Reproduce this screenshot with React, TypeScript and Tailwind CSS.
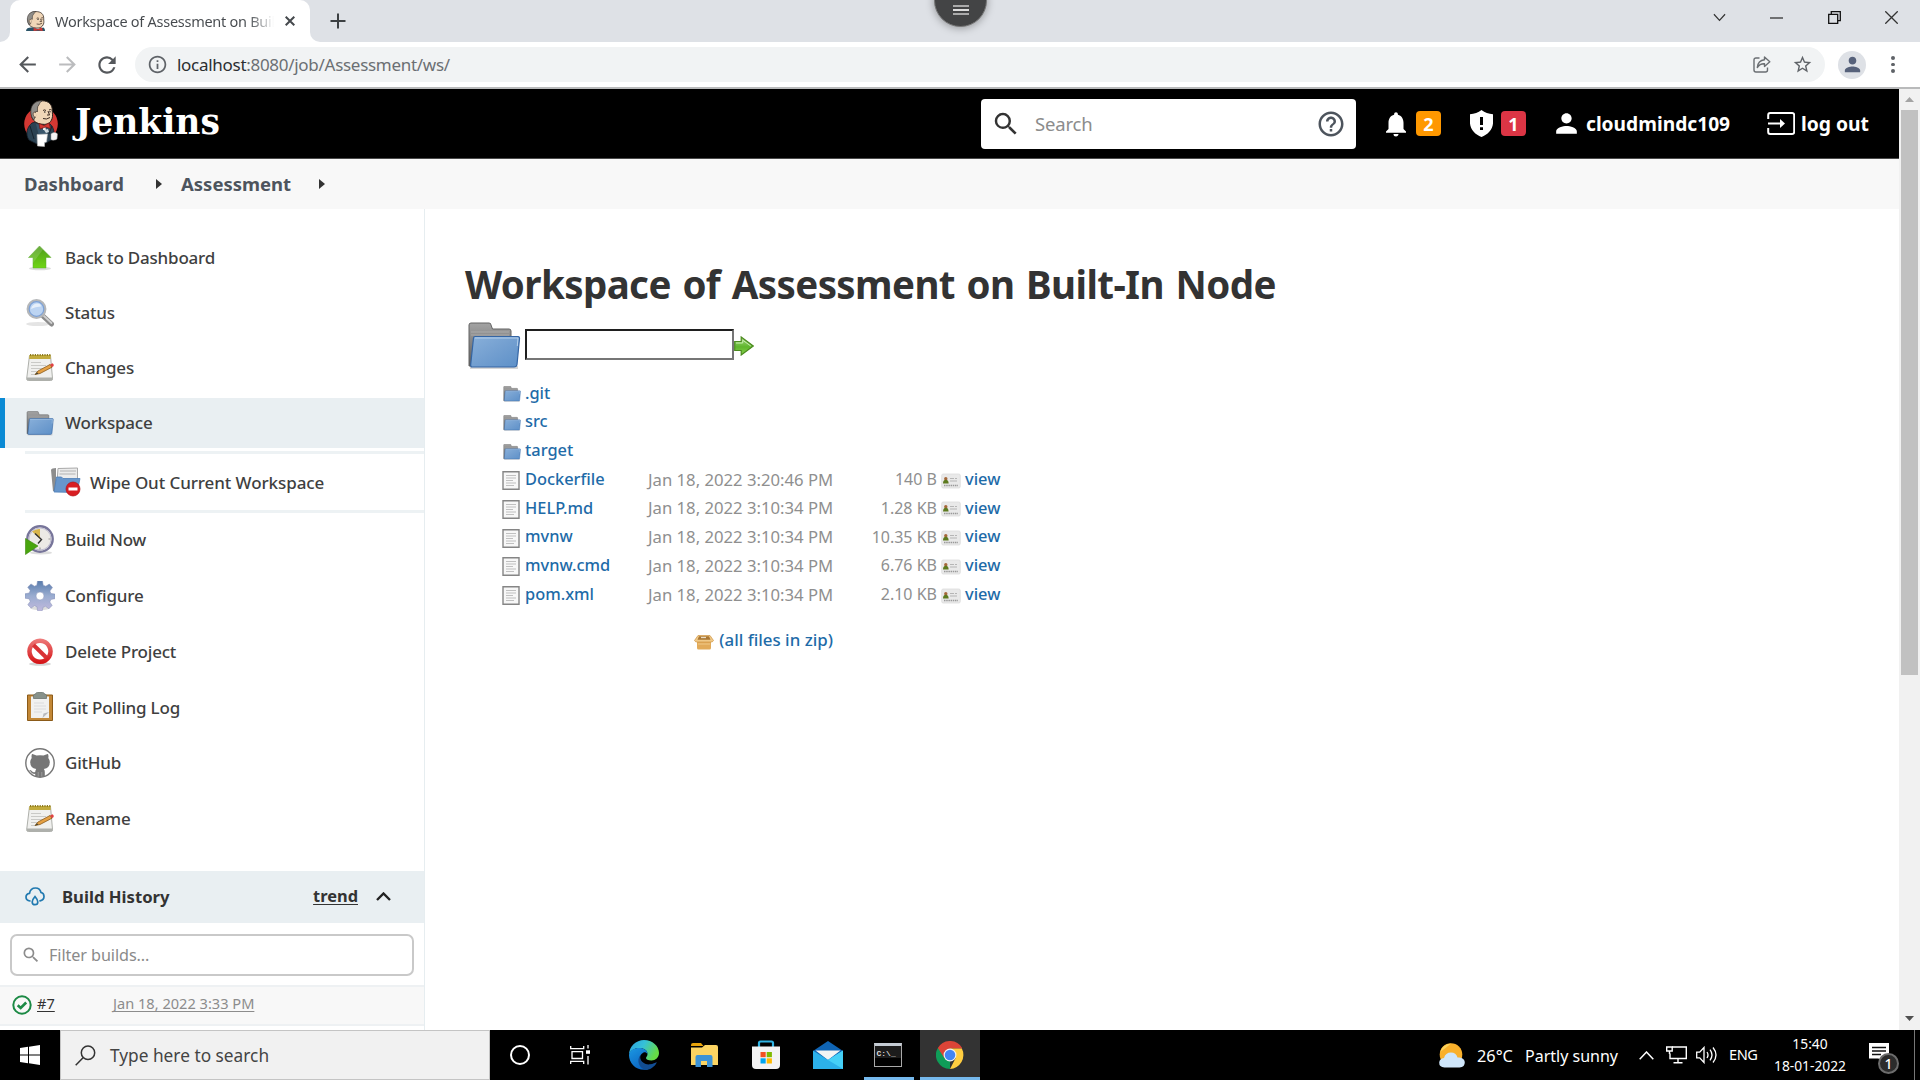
import React, { type ReactNode } from "react";
import {
  MdArrowBack,
  MdArrowForward,
  MdRefresh,
  MdOutlineInfo,
  MdStarBorder,
  MdPerson,
  MdSearch,
  MdHelpOutline,
  MdNotifications,
} from "react-icons/md";

/* ---------- Browser chrome icons ---------- */

const ButlerHead = () => (
  <>
    <path d="M10 8C8 4 12 .8 18 .8c7 0 10.500 4 10.300 10 0 3 .7 5-.3 8-1.500 4-4.500 6-9 5.500C13 24 8 21 7.500 15 7 11 8 9 10 8z" fill="#f0d6b7" stroke="#2b211c" strokeWidth="1" />
    <path d="M18 .8C11 .5 7 5 6.800 11c-.1 4 1 7 3 9l2-5-1-2 1.500-2 1 1c.5-3-.5-5 1.500-7 1-2 2-3.500 3.200-4.200z" fill="#8f8d89" stroke="#332d29" strokeWidth=".7" />
    <path d="M12 13c-2-2-3.500 0-2.500 2.500.5 1.500 1.500 2 2.500 1.500" fill="#f0d6b7" stroke="#4a3528" strokeWidth=".7" />
    <path d="M19 10.500q1.500-1.200 3 0M25 10q1.500-1 2.600 0M24 11l1.500 4h-2.500M19 18.500q3.500 1.500 7-1" fill="none" stroke="#3b2a22" strokeWidth="1" />
    <circle cx="20.800" cy="12" r=".8" fill="#222" />
    <circle cx="26" cy="11.700" r=".7" fill="#222" />
  </>
);

const JenkinsLogo = () => (
  <svg viewBox="0 0 34 47" className="h-[47px] w-[34px]">
    <circle cx="17" cy="24" r="16.800" fill="#d33833" />
    <path d="M5 40C1 34 3 27 8 23l7-2 11 3c4 3 5 10 3 15l-7 4-9 1z" fill="#2b4252" stroke="#14202a" strokeWidth=".8" />
    <path d="M12 24l3 12 8-1 3-10z" fill="#39566b" />
    <ButlerHead />
    <path d="M19 27l2-1 1 4h-3z" fill="#eee" />
    <path d="M15 23.500l5 2 5-2.500 1.500 5.500-5-1.500-5.500 2z" fill="#d33833" stroke="#7c1512" strokeWidth=".7" />
    <path d="M20 30l4-1 1 3-3 1z" fill="#cfd9de" />
    <path d="M13 34.500l10.500-.5-1 8-2 .5v4l-7-.5z" fill="#fff" stroke="#bbb" strokeWidth=".6" />
    <path d="M27 34c2-2 5-2 6.500 0l-.5 5c-2 1.500-5 1.500-6 .5z" fill="#f5f5f5" stroke="#999" strokeWidth=".5" />
    <path d="M6 26l4 13M28 26l-3 8" stroke="#17242e" strokeWidth="1" fill="none" />
  </svg>
);

const Favicon = () => (
  <svg viewBox="5 0 25 28.500" className="h-5 w-[19px]" preserveAspectRatio="none">
    <ButlerHead />
    <path d="M5 28.500c0-4 4-5.500 8-5l8 2 7-2c1.500 1 2 3 2 5z" fill="#2b5468" />
    <path d="M15 24l5 2 6-2.500 1 5-6-1-6 1z" fill="#d33833" />
  </svg>
);

const WindowButtons = () => (
  <div className="flex items-center gap-[44.500px] text-[#333]">
    <svg viewBox="0 0 14 9" className="h-[9px] w-[13px] fill-none stroke-current stroke-[1.3]"><path d="M1 1l6 6.500L13 1" /></svg>
    <svg viewBox="0 0 13 13" className="h-[13px] w-[13px] stroke-current stroke-[1.3]"><path d="M0 7h13" /></svg>
    <svg viewBox="0 0 13 13" className="h-[13px] w-[13px] fill-none stroke-[#111] stroke-[1.3]"><path d="M.7 3.300h9v9h-9zM3.300 3V.7h9v9H10" /></svg>
    <svg viewBox="0 0 13 13" className="h-[13px] w-[13px] stroke-current stroke-[1.3]"><path d="M.3.300l12.400 12.400M12.700.300L.3 12.700" /></svg>
  </div>
);

const TabStrip = () => (
  <div className="relative flex h-[42px] shrink-0 bg-[#dee1e6]">
    <div className="flex w-[10px] items-end">
      <div className="h-[10px] w-[10px] bg-white"><div className="h-full w-full rounded-br-[10px] bg-[#dee1e6]" /></div>
    </div>
    <div className="flex h-full w-[300px] items-center rounded-t-[10px] bg-white pr-[14px] pl-4">
      <Favicon />
      <div className="ml-[10px] w-[219px] overflow-hidden whitespace-nowrap bg-gradient-to-r from-[#45494d] from-88% to-white bg-clip-text text-[14.500px] leading-6 tracking-[-0.019em] text-transparent">
        Workspace of Assessment on Built
      </div>
      <svg viewBox="0 0 10 10" className="ml-[11px] h-[10px] w-[10px] shrink-0 stroke-[#45494d] stroke-2"><path d="M.7.700l8.600 8.600M9.300.700L.7 9.300" /></svg>
    </div>
    <div className="flex w-[10px] items-end">
      <div className="h-[10px] w-[10px] bg-white"><div className="h-full w-full rounded-bl-[10px] bg-[#dee1e6]" /></div>
    </div>
    <svg viewBox="0 0 16 16" className="mt-[13px] ml-[10px] h-4 w-4 stroke-[#3c4043] stroke-2"><path d="M8 .5v15M.5 8h15" /></svg>
    <div className="ml-auto flex h-[35px] items-center pr-[22px]"><WindowButtons /></div>
    <div className="absolute top-[-26px] left-[934px] flex h-[53px] w-[53px] flex-col items-center justify-end gap-0.5 rounded-full border border-[#777] bg-[#434445] pb-[11px] shadow-[0_1px_8px_rgba(0,0,0,0.35)]">
      <div className="h-0.5 w-4 bg-[#aaa]" />
      <div className="h-0.5 w-4 bg-[#ddd]" />
      <div className="h-0.5 w-4 bg-[#aaa]" />
    </div>
  </div>
);

const Toolbar = () => (
  <div className="flex h-[47px] shrink-0 items-center border-b-2 border-[#b9babb] bg-white">
    <MdArrowBack className="ml-[15px] h-[25px] w-[25px] text-[#55585c]" />
    <MdArrowForward className="ml-[15px] h-[25px] w-[25px] text-[#bbbcbe]" />
    <MdRefresh className="ml-[14px] h-[26px] w-[26px] text-[#55585c]" />
    <div className="ml-[15px] flex h-[35px] w-[1690px] items-center rounded-full bg-[#f1f3f4] pr-[12px] pl-[12px]">
      <MdOutlineInfo className="h-[21px] w-[21px] text-[#5f6368]" />
      <div className="ml-[9px] text-[17px] leading-6 tracking-[-0.017em] text-[#6b6f73]">
        <span className="text-[#2b2e31]">localhost</span>:8080/job/Assessment/ws/
      </div>
      <svg viewBox="0 0 18 17" className="ml-auto h-[17px] w-[18px] fill-none stroke-[#6a6e72] stroke-[1.400]">
        <path d="M6.500 2H3Q1 2 1 4v10q0 2 2 2h9.500q2 0 2-2v-2.500" />
        <path d="M11.500 1l5.300 4.700-5.300 4.700V7.800Q7 7.500 4.300 11.500 5 4.500 11.500 3.800z" strokeLinejoin="round" />
      </svg>
      <MdStarBorder className="ml-[21px] h-[21px] w-[21px] text-[#5f6368]" />
    </div>
    <div className="ml-[13px] flex h-7 w-7 items-center justify-center rounded-full bg-[#dee1e6]">
      <MdPerson className="h-[23px] w-[23px] text-[#56617a]" />
    </div>
    <div className="ml-[25px] flex flex-col gap-[3px]">
      <i className="h-[3.500px] w-[3.500px] rounded-full bg-[#5f6368]" />
      <i className="h-[3.500px] w-[3.500px] rounded-full bg-[#5f6368]" />
      <i className="h-[3.500px] w-[3.500px] rounded-full bg-[#5f6368]" />
    </div>
  </div>
);

/* ---------- Jenkins header ---------- */

const Header = () => (
  <header className="flex h-[70px] shrink-0 items-center border-b border-[#4a4a4a] bg-black text-white">
    <div className="ml-6"><JenkinsLogo /></div>
    <div className="mt-[-4px] ml-[17px] w-[145px] font-['DejaVu_Serif',serif] text-[34.500px] leading-[44px] font-bold">Jenkins</div>
    <div className="ml-[761px] flex h-[50px] w-[375px] items-center rounded-[4px] bg-white pr-[10px] pl-[10px]">
      <MdSearch className="h-[30px] w-[30px] text-[#333]" />
      <span className="ml-[14px] text-[18.500px] tracking-[-0.01em] text-[#8c8c8c]">Search</span>
      <MdHelpOutline className="ml-auto h-[30px] w-[30px] text-[#4d545d]" />
    </div>
    <MdNotifications className="ml-[25px] h-[30px] w-[30px]" />
    <div className="ml-[5px] flex h-[25px] w-[25px] items-center justify-center rounded-[4px] bg-[#ff9800] pt-px text-[18px] font-bold">2</div>
    <svg viewBox="0 0 23 27" className="ml-[29px] h-[27px] w-[23px]">
      <path d="M11.500 0Q6.500 3.800 0 4.200v9.300C.6 20 5.500 24.700 11.500 27c6-2.300 10.900-7 11.500-13.500V4.200Q16.500 3.800 11.500 0z" fill="#fff" />
      <path d="M10 7h3v8h-3zM10 17.200h3v2.800h-3z" fill="#000" />
    </svg>
    <div className="ml-[8px] flex h-[25px] w-[25px] items-center justify-center rounded-[4px] bg-[#dc3545] pt-px text-[18px] font-bold">1</div>
    <MdPerson className="ml-[25px] h-[31px] w-[31px]" />
    <span className="mt-[2px] ml-[4px] w-[145px] text-[19.200px] font-bold whitespace-nowrap">cloudmindc109</span>
    <svg viewBox="0 0 28 23" className="ml-[36px] h-[23px] w-[28px] fill-none stroke-white stroke-2">
      <path d="M1.200 7V3q0-2 2-2h22q2 0 2 2v17q0 2-2 2h-22q-2 0-2-2v-4" />
      <path d="M1 11.500h15" />
      <path d="M13 7l5 4.500-5 4.500z" fill="#fff" stroke="none" />
    </svg>
    <span className="mt-[2px] ml-[6px] text-[19.300px] font-bold whitespace-nowrap">log out</span>
  </header>
);

const Caret = () => (
  <svg viewBox="0 0 6 10" className="h-[10px] w-[6px]"><path d="M0 0l6 5-6 5z" fill="#333" /></svg>
);

const Breadcrumbs = () => (
  <nav className="flex h-[50px] shrink-0 items-center bg-[#f8f8f8] pl-[24px] text-[18.500px] font-bold text-[#4d545d]">
    <span className="w-[132px]">Dashboard</span>
    <Caret />
    <span className="ml-[19px] w-[138px]">Assessment</span>
    <Caret />
  </nav>
);

/* ---------- Sidebar icons ---------- */

const FolderIcon = ({ className }: { className: string }) => (
  <svg viewBox="0 0 54 48" className={className}>
    <defs>
      <linearGradient id="folderBack" x1="0" y1="0" x2="0" y2="1"><stop offset="0" stopColor="#a3a3a3" /><stop offset="1" stopColor="#5d5d5d" /></linearGradient>
      <linearGradient id="folderFront" x1="0" y1="0" x2="1" y2="1"><stop offset="0" stopColor="#89b0da" /><stop offset=".5" stopColor="#739fd0" /><stop offset="1" stopColor="#5d90c8" /></linearGradient>
    </defs>
    <path d="M3 45.500h48" stroke="#bbb" strokeWidth="3" opacity=".6" />
    <path d="M2 44V3q0-2 2-2h18q2 0 2 2l1.500 4H42q2 0 2 2v34z" fill="url(#folderBack)" stroke="#636363" strokeWidth="1" />
    <path d="M4 10h38M4 13h38" stroke="#b0b0b0" strokeWidth=".8" />
    <path d="M8 14.500h43q1.700 0 1.500 2l-2.500 26q-.3 2.500-3 2.500H5q-1.500 0-1.300-2.500L6.500 16q.2-1.500 1.500-1.500z" fill="url(#folderFront)" stroke="#3465a4" strokeWidth="1.200" />
    <path d="M8 16h43l-.7 8" fill="none" stroke="#b4cfea" strokeWidth="1" />
  </svg>
);

const UpArrowIcon = () => (
  <svg viewBox="0 0 30 30" className="h-[30px] w-[30px]">
    <defs><linearGradient id="upArrow" x1="0" y1="0" x2="0" y2="1"><stop offset="0" stopColor="#4e9a1c" /><stop offset="1" stopColor="#6fd614" /></linearGradient></defs>
    <ellipse cx="15" cy="25.500" rx="11" ry="1.800" fill="#ccc" opacity=".7" />
    <path d="M14.500 3L26 14.500h-5V25H8V14.500H3.500z" fill="url(#upArrow)" stroke="#5aa82c" strokeWidth=".5" />
    <path d="M14.500 3L3.500 14.500H8V20L18 6.500z" fill="#fff" opacity=".15" />
  </svg>
);

const MagnifierIcon = () => (
  <svg viewBox="0 0 30 30" className="h-[30px] w-[30px]">
    <ellipse cx="13" cy="26" rx="12" ry="2" fill="#e4e4e4" />
    <path d="M18.500 18.500l8 7.500" stroke="#8b8b8b" strokeWidth="5" strokeLinecap="round" />
    <path d="M19 18l7.500 7" stroke="#d0d0d0" strokeWidth="1.800" strokeLinecap="round" />
    <circle cx="11.500" cy="11" r="8.700" fill="#bcd4f2" stroke="#b5b7b9" strokeWidth="2.500" />
    <circle cx="11.500" cy="11" r="7.300" fill="none" stroke="#7ba0d6" strokeWidth="1.200" />
    <path d="M6 11q1-5 6-5.500 4 0 4 3-6 0-10 2.500z" fill="#e6effa" />
  </svg>
);

const NotepadIcon = () => (
  <svg viewBox="0 0 30 30" className="h-[30px] w-[30px]">
    <path d="M4.500 2.500h21l2 23q0 2-2 2h-22q-2 0-1.800-2z" fill="#f0f0ee" stroke="#aeb0ab" strokeWidth="1" />
    <path d="M1.700 24.500h26v2q0 1-1.500 1h-23q-1.500 0-1.500-1z" fill="#aeb0ac" />
    <path d="M4.400 2h21.300v4H4.200z" fill="#c2ab3c" />
    <path d="M5 2h21" stroke="#8f7c1e" strokeWidth="2" strokeDasharray="1.200 1.200" />
    <path d="M6 9.500h10M6 12.500h15M6 15.500h13M6 18.500h8M6 21.500h5" stroke="#c9c9c6" strokeWidth="1" />
    <path d="M10 21.500l3-3.500L25 11.500l2 2.700L15 20.500z" fill="#e5a043" stroke="#8a5a1c" strokeWidth=".8" />
    <path d="M25 11.500l2.500-1.200q1.500.6 1.200 2.700L27 14.200z" fill="#e04343" />
    <path d="M10 21.500l2-2.300 1.500 1.500z" fill="#443" />
  </svg>
);

const WipeIcon = () => (
  <svg viewBox="0 0 32 30" className="h-[30px] w-[32px]">
    <path d="M1 3q0-1 1.500-1.500L6 1v23H3z" fill="#8d8d8d" />
    <path d="M8 1.500L27.500 1v14H7z" fill="#ececec" stroke="#a9a9a9" strokeWidth="1" />
    <path d="M10 4h16M9.500 7h16" stroke="#c5c5c5" strokeWidth="1.500" />
    <path d="M4 25L6.500 10h5l1.500 1.500h17l-3 14z" fill="#6796cb" stroke="#4d7db7" strokeWidth=".8" />
    <circle cx="23" cy="22" r="7" fill="#d81d22" stroke="#b11116" strokeWidth=".7" />
    <path d="M18.500 20.500h9v3h-9z" fill="#fff" />
  </svg>
);

const ClockIcon = () => (
  <svg viewBox="0 0 30 30" className="h-[30px] w-[30px]">
    <ellipse cx="16" cy="27.800" rx="11" ry="1.700" fill="#ddd" />
    <circle cx="15" cy="14" r="12.700" fill="#eceae6" stroke="#77759a" strokeWidth="2.400" />
    <circle cx="15" cy="14" r="11" fill="none" stroke="#c0bed2" strokeWidth="1" />
    <path d="M15 14L7 6.500Q11 3.500 15 4z" fill="#d9b64b" />
    <path d="M10 8.500l6.500 6-3.500 4" fill="none" stroke="#333" strokeWidth="1.400" />
    <path d="M23.500 14h2M15 22.500v2" stroke="#999" strokeWidth="1.200" />
    <path d="M.5 13.500L13 21 .5 29.500z" fill="#49a50e" stroke="#3c860c" strokeWidth=".6" />
  </svg>
);

const GearIcon = () => (
  <svg viewBox="0 0 30 30" className="h-[30px] w-[30px]">
    <defs><linearGradient id="gear" x1="0" y1="0" x2="0" y2="1"><stop offset="0" stopColor="#587cac" /><stop offset=".5" stopColor="#9aacd0" /><stop offset="1" stopColor="#c0b9dd" /></linearGradient></defs>
    <ellipse cx="15" cy="27" rx="10" ry="2" fill="#ddd" />
    <g fill="url(#gear)" stroke="#8790b8" strokeWidth=".5">
      <path d="M12.500 0h5l.7 4.200 2.600 1L24.300 3 27.500 6.500 24.900 10l1 2.400 4.100.7v4.600l-4.100.7-1.100 2.600 2.400 3.400-3.300 3.300-3.400-2.400-2.400 1L17.200 29.800h-4.600l-.7-4.100-2.500-1-3.400 2.400L2.800 23.800l2.400-3.400-1-2.500L0 17.200v-4.400l4.200-.8L5.200 9.600 2.700 6.200 6 2.900l3.400 2.300 2.400-1zM15 11a4 4 0 1 0 0 8 4 4 0 1 0 0-8z" fillRule="evenodd" />
    </g>
  </svg>
);

const ForbiddenIcon = () => (
  <svg viewBox="0 0 30 30" className="h-[30px] w-[30px]">
    <defs><linearGradient id="stop" x1="0" y1="0" x2="0" y2="1"><stop offset="0" stopColor="#ee7d7d" /><stop offset="1" stopColor="#d40f12" /></linearGradient></defs>
    <ellipse cx="15" cy="27" rx="11" ry="1.800" fill="#d5d5d5" />
    <path d="M15 1.500a12.800 12.800 0 1 0 .01 0zM15 6a8.300 8.300 0 1 1-.01 0z" fill="url(#stop)" fillRule="evenodd" />
    <path d="M8.500 8l13 12.800" stroke="#d93236" strokeWidth="4" />
  </svg>
);

const ClipboardIcon = () => (
  <svg viewBox="0 0 30 30" className="h-[30px] w-[30px]">
    <path d="M2.500 3h25v25.500h-25z" fill="#c28736" stroke="#8b5a18" strokeWidth="1" />
    <path d="M6 4.500h18V26H6z" fill="#f1f1f0" />
    <path d="M9 11h10M9 14h12M9 17h12M9 20h8" stroke="#dcdcdb" strokeWidth="1.200" />
    <path d="M17.500 26l1-4.500L24 20z" fill="#b9babc" />
    <path d="M11 1.500q0-1 1.500-1h5q1.500 0 1.500 1l2.500 1.500v3.500h-13V3z" fill="#87918a" stroke="#6b746e" strokeWidth=".8" />
  </svg>
);

const OctocatIcon = () => (
  <svg viewBox="0 0 30 30" className="h-[30px] w-[30px]">
    <circle cx="15" cy="15" r="14.200" fill="#fff" stroke="#767676" strokeWidth="1.400" />
    <path d="M7 6q.5-.5 4.500 1.600 3.500-.7 7 0Q22.500 5.500 23 6q.8 2 .3 4 1.500 2 1.500 4 0 6.200-6 7 1 1.200 1 3v4.500q-4.800 1-9.600 0v-2.700q-3.200.5-4.400-1.700-.7-1.500-1.800-2 1.500-.6 3 1.200 1 1.300 3.200.7.100-1.700 1-3-6-.8-6-7 0-2 1.500-4-.5-2 .3-4z" fill="#767676" />
    <path d="M13.200 24v4.500M16.800 24v4.500" stroke="#a5a5a5" strokeWidth=".8" />
  </svg>
);

/* ---------- Sidebar ---------- */

const Task = ({ icon, label, active = false }: { icon: ReactNode; label: string; active?: boolean }) => (
  <a
    className={
      active
        ? "flex h-[50px] items-center border-l-[5px] border-[#0b8ad4] bg-[#e9eff2] pl-5"
        : "flex h-[50px] items-center pl-[25px]"
    }
  >
    <span className="flex w-[30px] justify-center">{icon}</span>
    <span className="ml-[10px]">{label}</span>
  </a>
);

const BuildHistory = () => (
  <section className="tracking-normal">
    <div className="flex h-[52px] items-center bg-[#e9eff2] pr-[33px] pl-[25px] font-bold text-[#333]">
      <svg viewBox="0 0 20 19" className="h-[19px] w-[20px] fill-none stroke-[#2179b0] stroke-[1.700]">
        <path d="M5 14Q1 13.500 1 10 1 6.800 4.500 6.300 5.500 1 10.500 1q4.500 0 5.500 4.500 3 .5 3 4 0 3.500-4 4.300" strokeLinecap="round" />
        <path d="M10 9.500q2.800 3.300 2.800 5.500 0 2.700-2.800 2.700T7.200 15q0-2.200 2.800-5.500z" />
      </svg>
      <span className="ml-[17px] text-[16.700px]">Build History</span>
      <span className="ml-auto text-[16.400px] underline underline-offset-2">trend</span>
      <svg viewBox="0 0 15 9" className="ml-[18px] h-[9px] w-[15px] fill-none stroke-[#222] stroke-[2.400]"><path d="M1 8l6.500-6.500L14 8" /></svg>
    </div>
    <div className="mx-[10px] mt-[11px] flex h-[42px] items-center rounded-[7px] border-2 border-[#c9c9c9] bg-white pl-[9px] font-normal">
      <MdSearch className="h-[20px] w-[20px] text-[#8c8c8c]" />
      <span className="ml-[8px] text-[16.200px] tracking-[-0.005em] text-[#8a8a8a]">Filter builds...</span>
    </div>
    <div className="mt-[9px] flex h-[41px] items-center border-y-2 border-[#eef1f3] bg-[#f8f8f8] pl-[12px] text-[14.600px] font-normal">
      <svg viewBox="0 0 20 20" className="h-[20px] w-[20px] fill-none stroke-[#1c8a45] stroke-2">
        <circle cx="10" cy="10" r="8.700" />
        <path d="M5.700 10.200l3 2.800 5.500-5.500" strokeWidth="2.600" />
      </svg>
      <span className="mt-[-2px] ml-[5px] w-[76px] text-[#333] underline underline-offset-2">#7</span>
      <span className="mt-[-2px] text-[#8c8c8c] underline underline-offset-2">Jan 18, 2022 3:33 PM</span>
    </div>
  </section>
);

const Sidebar = () => (
  <aside className="w-[425px] shrink-0 overflow-hidden border-r border-[#e6edf0] pt-[24px] text-[17px] font-medium tracking-[-0.012em] text-[#3f3f3f]">
    <div className="flex flex-col gap-[5px]">
      <Task icon={<UpArrowIcon />} label="Back to Dashboard" />
      <Task icon={<MagnifierIcon />} label="Status" />
      <Task icon={<NotepadIcon />} label="Changes" />
      <Task icon={<FolderIcon className="h-[25px] w-[28px]" />} label="Workspace" active />
    </div>
    <div className="mt-[3px] ml-[25px] flex h-[62px] items-center border-y-[3px] border-[#edf2f4] pl-[25px]">
      <WipeIcon />
      <span className="mt-[2px] ml-[8px] tracking-[-0.005em]">Wipe Out Current Workspace</span>
    </div>
    <div className="mt-[2px] flex flex-col gap-[5.750px]">
      <Task icon={<ClockIcon />} label="Build Now" />
      <Task icon={<GearIcon />} label="Configure" />
      <Task icon={<ForbiddenIcon />} label="Delete Project" />
      <Task icon={<ClipboardIcon />} label="Git Polling Log" />
      <Task icon={<OctocatIcon />} label="GitHub" />
      <Task icon={<NotepadIcon />} label="Rename" />
    </div>
    <div className="mt-[27px]"><BuildHistory /></div>
  </aside>
);

/* ---------- File listing ---------- */

const FileIcon = () => (
  <svg viewBox="0 0 18 19" className="h-[19px] w-[18px]">
    <path d="M1 .800h16v17.400H1z" fill="#f7f7f7" stroke="#858585" strokeWidth="1.400" />
    <path d="M4 4.500h10M4 7h10M4 9.500h7M4 12h10M4 14.500h8" stroke="#c0c0c0" strokeWidth="1.100" />
  </svg>
);

const CardIcon = () => (
  <svg viewBox="0 0 20 16" className="h-[16px] w-[20px]">
    <path d="M.7 2.500q0-1.500 1.500-1.500h15.600q1.500 0 1.500 1.500v11q0 1.500-1.500 1.500H2.200Q.7 15 .7 13.500z" fill="#e9e9e9" stroke="#dcdcdc" strokeWidth=".8" />
    <circle cx="4.800" cy="5.800" r="1.700" fill="#a5673a" />
    <path d="M2 10.500q0-3.700 2.800-3.700t2.800 3.700z" fill="#5d7a1f" />
    <path d="M9 5.500h4M14 5.500h2M9 8h7" stroke="#b5b5b5" strokeWidth="1" />
    <path d="M3 12.500h14" stroke="#999" strokeWidth="1.400" strokeDasharray="1.500 .7" />
  </svg>
);

const BoxIcon = () => (
  <svg viewBox="0 0 20 16" className="h-[16px] w-[20px]">
    <path d="M3 7h14v7q0 1.500-1.500 1.500h-11Q3 15.500 3 14z" fill="#e2ab5a" />
    <path d="M4 1.500h12l3.500 5q-1 2-3 1.500h-13q-2 .5-3-1.500z" fill="#f0c988" stroke="#cf9442" strokeWidth=".7" />
    <path d="M5 2.300h10l1.500 3.500h-13z" fill="#a97632" />
    <path d="M7 3.500h5" stroke="#e9dcc5" strokeWidth="1.300" />
    <path d="M4 10h12" stroke="#f0c988" strokeWidth="1" />
  </svg>
);

const GoArrow = () => (
  <svg viewBox="0 0 20 20" className="h-[20px] w-[20px]">
    <defs><linearGradient id="go" x1="0" y1="0" x2="0" y2="1"><stop offset="0" stopColor="#a5d884" /><stop offset=".55" stopColor="#5fb62c" /><stop offset="1" stopColor="#86d24c" /></linearGradient></defs>
    <path d="M.7 5.500h6.500v-4.500L19.300 10 7.200 19v-4.500H.7z" fill="url(#go)" stroke="#4b8a1e" strokeWidth="1.200" />
    <path d="M2 7h6.700V4.200L16.800 10" fill="none" stroke="#c6ecae" strokeWidth="1" />
  </svg>
);

const folders = [".git", "src", "target"];
const files = [
  { name: "Dockerfile", date: "Jan 18, 2022 3:20:46 PM", size: "140 B" },
  { name: "HELP.md", date: "Jan 18, 2022 3:10:34 PM", size: "1.28 KB" },
  { name: "mvnw", date: "Jan 18, 2022 3:10:34 PM", size: "10.35 KB" },
  { name: "mvnw.cmd", date: "Jan 18, 2022 3:10:34 PM", size: "6.76 KB" },
  { name: "pom.xml", date: "Jan 18, 2022 3:10:34 PM", size: "2.10 KB" },
];

const Main = () => (
  <main className="flex-1 pl-[40px]">
    <h1 className="mt-[52px] text-[38.500px] leading-[46px] font-bold tracking-[-0.6px] whitespace-nowrap text-[#333] [word-spacing:2.2px]">
      Workspace of Assessment on Built-In Node
    </h1>
    <div className="mt-[14px] flex h-[49px] items-center pl-[2px]">
      <FolderIcon className="h-[48px] w-[54px]" />
      <div className="mt-[-2px] ml-[4px] h-[31px] w-[209px] border-2 border-t-[#1f1f1f] border-r-[#767676] border-b-[#767676] border-l-[#1f1f1f] bg-white" />
      <GoArrow />
    </div>
    <div className="mt-[8.500px] pl-[37px] text-[16.400px]">
      {folders.map((name) => (
        <div key={name} className="flex h-[28.750px] items-center pl-px">
          <FolderIcon className="mt-[3px] h-[16px] w-[18px]" />
          <span className="ml-[4px] font-medium text-[#1e6ba8]">{name}</span>
        </div>
      ))}
      {files.map((f) => (
        <div key={f.name} className="flex h-[28.750px] items-center">
          <span className="mt-[3px]"><FileIcon /></span>
          <span className="ml-[5px] w-[123px] font-medium text-[#1e6ba8]">{f.name}</span>
          <span className="w-[185px] text-[16.700px] whitespace-nowrap text-[#8f8f8f]">{f.date}</span>
          <span className="w-[104px] text-right text-[16px] text-[#8f8f8f]">{f.size}</span>
          <span className="mt-[3px] ml-[4px]"><CardIcon /></span>
          <span className="ml-[4px] font-medium text-[#1e6ba8]">view</span>
        </div>
      ))}
      <div className="mt-[17px] flex h-[29px] w-[331px] items-center justify-end">
        <span className="mt-[3px]"><BoxIcon /></span>
        <span className="ml-[5px] text-[16.900px] font-medium text-[#1e6ba8]">(all files in zip)</span>
      </div>
    </div>
  </main>
);

const Scrollbar = () => (
  <div className="flex w-[21px] shrink-0 flex-col items-center bg-[#f1f1f1]">
    <svg viewBox="0 0 9 5" className="my-[8px] h-[5px] w-[9px]"><path d="M0 5l4.500-5L9 5z" fill="#a3a3a3" /></svg>
    <div className="h-[565px] w-[17px] bg-[#c1c1c1]" />
    <svg viewBox="0 0 9 5" className="mt-auto mb-[9px] h-[5px] w-[9px]"><path d="M0 0l4.500 5L9 0z" fill="#505050" /></svg>
  </div>
);

/* ---------- Taskbar ---------- */

const EdgeIcon = () => (
  <svg viewBox="0 0 30 30" className="h-[30px] w-[30px]">
    <defs>
      <linearGradient id="edgeTop" x1="0" y1="0" x2="1" y2=".4"><stop offset="0" stopColor="#2a9fe0" /><stop offset=".5" stopColor="#35c1d8" /><stop offset="1" stopColor="#66db45" /></linearGradient>
      <linearGradient id="edgeBody" x1="0" y1="0" x2=".6" y2="1"><stop offset="0" stopColor="#1b98e3" /><stop offset="1" stopColor="#0c64c0" /></linearGradient>
    </defs>
    <path d="M15 0C23.500 0 30 6 30 13c0 4.500-3.500 7.500-7.500 7.500-3.500 0-5.500-1.300-5.500-2.500s1.500-1.500 1.500-4c0-3.500-3.500-6-8-6C5 8 1 11 0 15 0 6.500 7 0 15 0z" fill="url(#edgeTop)" />
    <path d="M0 15C.5 10.500 5 8 10.500 8c4.500 0 8 2.500 8 6-1-1.800-3-2-4-1.500-7 3.500-4 15 5 16.800C8 32 0 24 0 15z" fill="url(#edgeBody)" />
    <path d="M11.500 15c-1.500 6 4 10 9.500 9.300 3-.3 5.200-1.500 6.700-2.300-.5 3-5 7.300-10.200 8C10 29 7 20 11.500 15z" fill="#124d92" />
  </svg>
);

const ExplorerIcon = () => (
  <svg viewBox="0 0 27 24" className="h-[24px] w-[27px]">
    <path d="M0 2q0-2 2-2h8l2.500 3H0z" fill="#e8a30a" />
    <path d="M0 4.500h11L14 2h11q2 0 2 2v18H0z" fill="#fcd462" />
    <path d="M4.500 24V14q0-2 2-2h13q2 0 2 2v10H16v-6h-6v6z" fill="#3d93d6" />
  </svg>
);

const StoreIcon = () => (
  <svg viewBox="0 0 30 30" className="h-[30px] w-[30px]">
    <path d="M8 7V3q0-1.500 1.500-1.500h11Q22 1.500 22 3v4" fill="none" stroke="#2fb3e3" strokeWidth="2.200" />
    <path d="M1 6.500h28V25q0 4-4 4H5q-4 0-4-4z" fill="#f3f3f3" />
    <path d="M9.500 12h5.200v5.200H9.500z" fill="#f25022" />
    <path d="M15.700 12h5.200v5.200h-5.200z" fill="#7fba00" />
    <path d="M9.500 18.300h5.200v5.200H9.500z" fill="#00a4ef" />
    <path d="M15.700 18.300h5.200v5.200h-5.200z" fill="#ffb900" />
  </svg>
);

const MailIcon = () => (
  <svg viewBox="0 0 30 28" className="h-[28px] w-[30px]">
    <path d="M0 10L15 0l15 10-15 10z" fill="#0f64b4" />
    <path d="M2.500 9.500h25L15 19z" fill="#f4f4f4" />
    <path d="M0 9.500l15 9.500L30 9.500V28H0z" fill="#2cb1ea" />
    <path d="M30 9.500V28L15 19z" fill="#45d0f7" />
  </svg>
);

const TerminalIcon = () => (
  <div className="h-[24px] w-[28px] border border-[#a9a9a9] border-t-[3px] border-t-[#c5ccd4] bg-black">
    <div className="bg-[#1c1c1c] pt-[3px] pl-[2px] font-['Liberation_Mono',monospace] text-[8px] leading-[9px] font-bold text-[#ddd]">C:\_</div>
  </div>
);

const ChromeIcon = () => (
  <svg viewBox="0 0 48 48" className="h-[28px] w-[28px]">
    <path d="M24 24L24 48A24 24 0 0 1 3.200 12z" fill="#0f9d58" />
    <path d="M24 13h20.300L44.800 12A24 24 0 0 0 3.200 12L14.500 29.500z" fill="#db4437" />
    <path d="M24 13h20.300A24 24 0 0 1 24 48L33.500 29.500z" fill="#ffcd40" />
    <circle cx="24" cy="24" r="11" fill="#f1f1f1" />
    <circle cx="24" cy="24" r="9" fill="#4285f4" />
  </svg>
);

const Taskbar = () => (
  <footer className="flex h-[50px] shrink-0 items-center bg-black text-white">
    <div className="flex h-full w-[60px] items-center justify-center">
      <svg viewBox="0 0 20 20" className="h-[20px] w-[20px] fill-white"><path d="M0 3l8-1.200v7.700H0zM9 1.700L20 0v9.500H9zM0 10.500h8v7.700L0 17zM9 10.500h11V20L9 18.300z" /></svg>
    </div>
    <div className="flex h-full w-[430px] items-center border border-[#c4c4c4] bg-[#f1f1f1] pl-[14px]">
      <svg viewBox="0 0 21 21" className="h-[21px] w-[21px] fill-none stroke-[#333] stroke-[1.500]"><circle cx="13" cy="7.700" r="6.700" /><path d="M8.300 12.500L.7 20.300" /></svg>
      <span className="mt-[2px] ml-[14px] text-[17.300px] text-[#444]">Type here to search</span>
    </div>
    <div className="flex w-[60px] justify-center"><div className="h-[20px] w-[20px] rounded-full border-[2.500px] border-white" /></div>
    <div className="flex w-[60px] justify-center">
      <svg viewBox="0 0 20 20" className="h-[20px] w-[20px] fill-none stroke-white stroke-[1.300]">
        <path d="M.7 1v2.700h13V1M.7 19v-2.700h13V19M2 6.700h10.500v6.800H2zM18 0v3.500M18 11v8.500" />
        <path d="M16 5.300h4v3.500h-4z" fill="#fff" stroke="none" />
      </svg>
    </div>
    <div className="ml-[3px] flex w-[61px] justify-center"><EdgeIcon /></div>
    <div className="flex w-[61px] justify-center"><ExplorerIcon /></div>
    <div className="flex w-[61px] justify-center"><StoreIcon /></div>
    <div className="flex w-[63px] justify-center"><MailIcon /></div>
    <div className="ml-[5px] flex h-full w-[50px] items-center justify-center border-b-[3px] border-[#76b9ed] pt-[3px] pr-[3px]"><TerminalIcon /></div>
    <div className="ml-[6px] flex h-full w-[60px] items-center justify-center border-b-[3px] border-[#76b9ed] bg-[#333] pt-[3px]"><ChromeIcon /></div>
    <svg viewBox="0 0 26 25" className="ml-[459px] h-[25px] w-[26px]">
      <circle cx="12" cy="11.500" r="11.300" fill="#f9b02b" />
      <path d="M1 9Q3.500 1 12 .500 7 5 1 9z" fill="#fcd35c" />
      <path d="M5.500 24.500Q0 24 .2 19.500.500 15.500 5 15q1.500-5.500 7-5.500 5 0 6.500 5 6.500-.5 7.300 4.500.2 5-5.300 5.500z" fill="#cfe6fa" />
    </svg>
    <span className="mt-[2px] ml-[12px] w-[37px] text-[16.300px] whitespace-nowrap">26°C</span>
    <span className="mt-[2px] ml-[11px] w-[94px] text-[16px] whitespace-nowrap">Partly sunny</span>
    <svg viewBox="0 0 15 9" className="ml-[20px] h-[9px] w-[15px] fill-none stroke-white stroke-[1.500]"><path d="M.7 8.300L7.500 1l6.800 7.300" /></svg>
    <svg viewBox="0 0 21 18" className="ml-[12px] h-[18px] w-[21px] fill-none stroke-white stroke-[1.400]">
      <path d="M6 1h14.300v11.500H4V7.500M12 12.500v4M7.500 16.700h9" />
      <path d="M.7 1h5.500v4H.7zM3.500 5v3" />
    </svg>
    <svg viewBox="0 0 21 18" className="ml-[9px] h-[18px] w-[21px] fill-none stroke-white stroke-[1.300]">
      <path d="M.7 6.200h3L8 1.500v15l-4.300-4.700h-3z" />
      <path d="M11 6q2 3 0 6M14 3.700q4 5.300 0 10.600M17 1.500q6 7.500 0 15" />
    </svg>
    <span className="ml-[12px] w-[29px] text-[14.600px] tracking-[-0.03em]">ENG</span>
    <div className="ml-[15px] flex w-[74px] flex-col items-center text-[13.800px] leading-[22px] whitespace-nowrap">
      <span>15:40</span>
      <span>18-01-2022</span>
    </div>
    <div className="relative ml-[22px] h-[30px] w-[30px] pt-[3px]">
      <svg viewBox="0 0 20 20" className="h-[20px] w-[20px]"><path d="M0 0h20v15.500h-6V20l-4.500-4.500H0z" fill="#fff" /><path d="M3 4.500h14M3 8h14M3 11.500h9" stroke="#111" strokeWidth="1.300" /></svg>
      <div className="absolute top-[13px] left-[9px] flex h-[21px] w-[21px] items-center justify-center rounded-full border-2 border-[#6c6c6c] bg-[#2b2b2b] text-[14px] leading-none font-medium">1</div>
    </div>
    <div className="ml-auto h-full w-[6px] border-l border-[#777]" />
  </footer>
);

export default function App() {
  return (
    <div className="flex h-[1080px] w-[1920px] flex-col overflow-hidden bg-white font-['Noto_Sans',sans-serif]">
      <TabStrip />
      <Toolbar />
      <div className="flex min-h-0 flex-1">
        <div className="flex min-w-0 flex-1 flex-col">
          <Header />
          <Breadcrumbs />
          <div className="flex min-h-0 flex-1">
            <Sidebar />
            <Main />
          </div>
        </div>
        <Scrollbar />
      </div>
      <Taskbar />
    </div>
  );
}
